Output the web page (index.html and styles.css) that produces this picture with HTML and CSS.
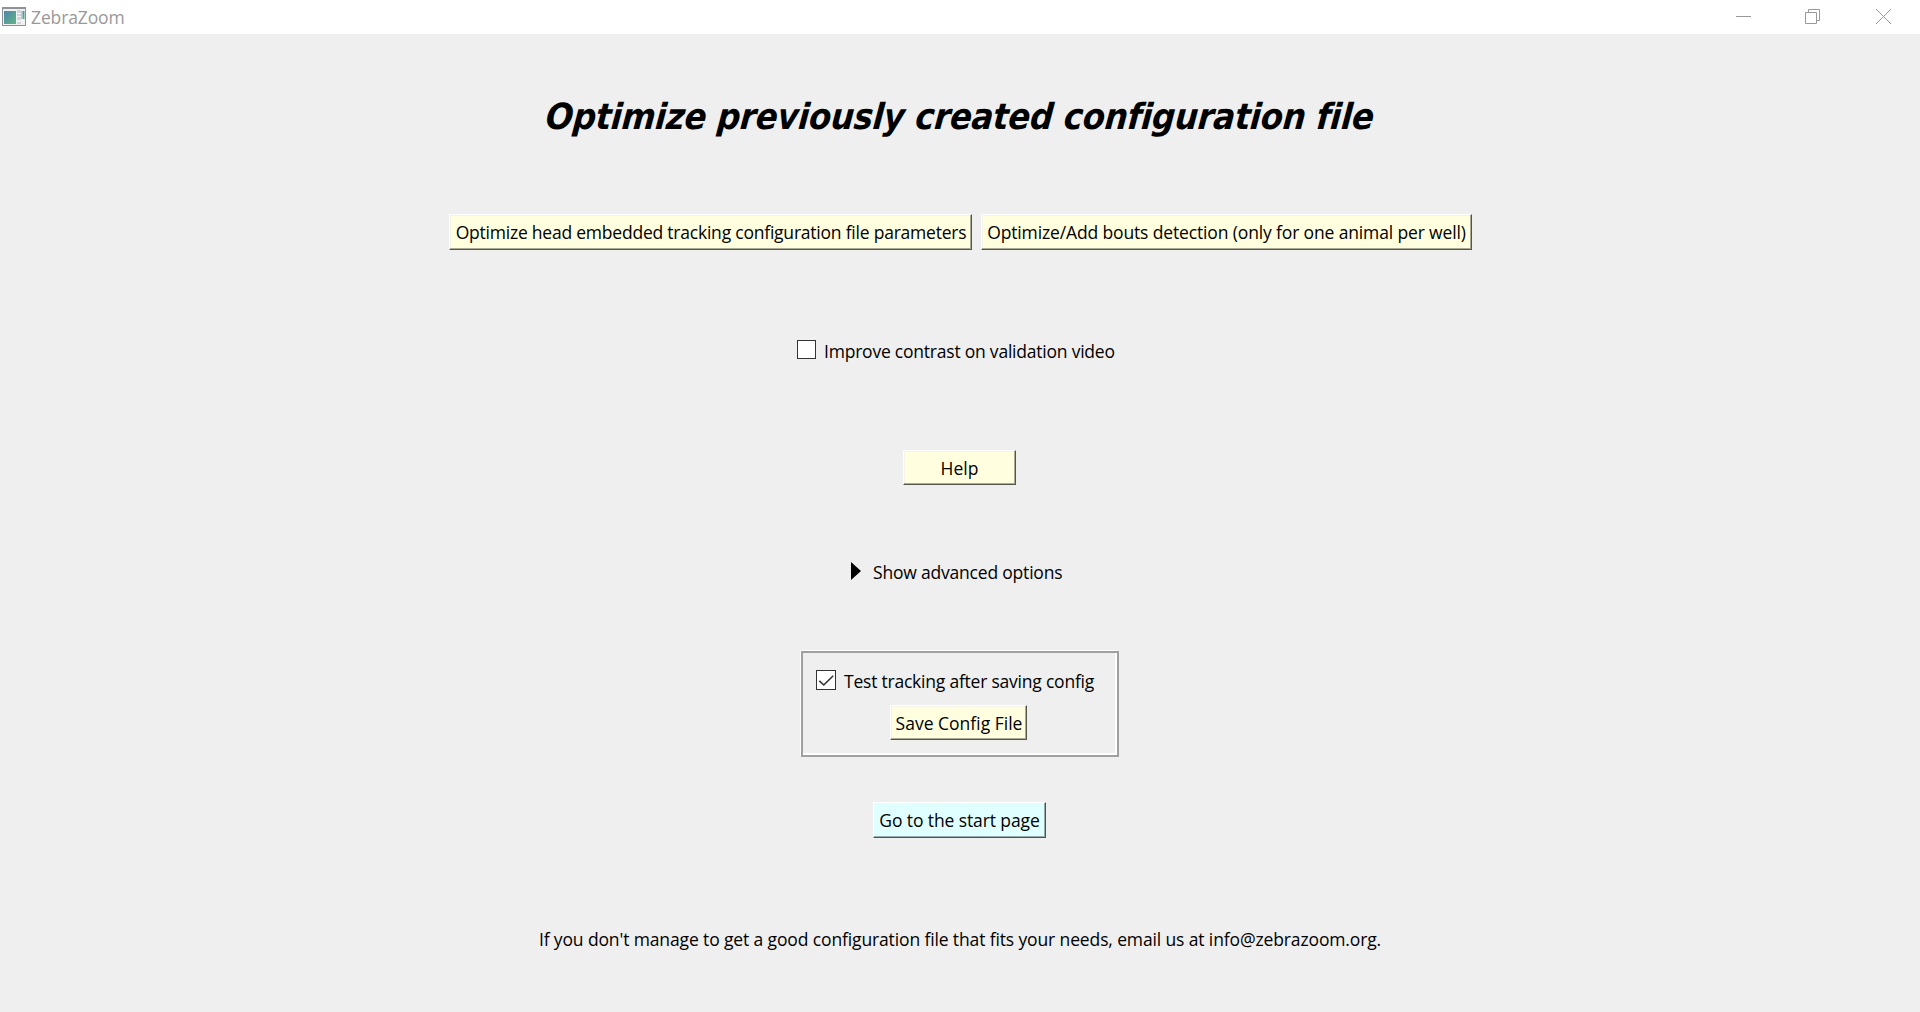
FILE: index.html
```html
<!DOCTYPE html>
<html lang="en">
<head>
<meta charset="utf-8">
<title>ZebraZoom</title>
<link rel="stylesheet" href="styles.css">
</head>
<body>
<header class="titlebar">
  <svg class="app-icon" width="24" height="19" viewBox="0 0 24 19">
    <defs><linearGradient id="g" x1="0" y1="0" x2="1" y2="1"><stop offset="0" stop-color="#4d86ad"/><stop offset="1" stop-color="#62b583"/></linearGradient></defs>
    <path d="M0 0h24v19H0z" fill="#8d9297"/>
    <path d="M1 2h22v16H1z" fill="#f0f1f3"/>
    <path d="M2 4h12v13H2z" fill="url(#g)"/>
    <path d="M15 3h4v3h-4zm0 4h4v2h-4zm0 3h4v3h-4zm0 5h4v2h-4z" fill="#d2d4d6"/>
    <path d="M19 4h1v8h-1z" fill="#bcc6d0"/>
    <path d="M20.500 4h2v8h-2z" fill="url(#g)"/>
  </svg>
  <span class="app-name">ZebraZoom</span>
  <div class="controls">
    <svg width="15" height="15" viewBox="0 0 15 15"><path d="M0 7.500h15"/></svg>
    <svg class="restore" width="15" height="15" viewBox="0 0 15 15"><path d="M.5 3.500h11v11H.5zM3.500 3V.5h11v11H12"/></svg>
    <svg width="15" height="15" viewBox="0 0 15 15"><path d="M0 0l15 15M15 0L0 15"/></svg>
  </div>
</header>
<main class="page">
  <h1 class="title">Optimize previously created configuration file</h1>
  <div class="actions">
    <button class="btn embedded">Optimize head embedded tracking configuration file parameters</button>
    <button class="btn bouts">Optimize/Add bouts detection (only for one animal per well)</button>
  </div>
  <label class="check contrast"><span class="box"></span><span>Improve contrast on validation video</span></label>
  <button class="btn help">Help</button>
  <div class="advanced">
    <svg width="10" height="18" viewBox="0 0 10 18"><path d="M0 0l10 9-10 9z"/></svg>
    <span>Show advanced options</span>
  </div>
  <section class="save-group">
    <label class="check test">
      <span class="box"><svg width="18" height="18" viewBox="0 0 18 18"><path d="M2.300 9.800L6.800 14 16.200 4.800"/></svg></span>
      <span>Test tracking after saving config</span>
    </label>
    <button class="btn save">Save Config File</button>
  </section>
  <button class="btn start">Go to the start page</button>
  <p class="contact">If you don't manage to get a good configuration file that fits your needs, email us at info@zebrazoom.org.</p>
</main>
</body>
</html>
```
FILE: styles.css
```css
* { box-sizing: border-box; }
body { margin: 0; height: 1012px; overflow: hidden; background: #efefef; color: #000; font: 17.5px/24px "Open Sans", "Noto Sans", sans-serif; white-space: nowrap; }
svg { display: block; }

.titlebar { display: flex; align-items: flex-start; height: 34px; background: #fff; padding: 5px 29px 0 2px; color: #999; }
.app-icon { margin-top: 2px; }
.app-name { margin-left: 5px; letter-spacing: -.13px; }
.controls { display: flex; margin: 4px 0 0 auto; }
.controls svg { fill: none; stroke: #999; }
.controls .restore { margin: 0 56px 0 54px; }

.page { display: flex; flex-direction: column; align-items: center; }
.title { margin: 59px 0 0; font: italic bold 36px/48px "DejaVu Sans Condensed", "DejaVu Sans", sans-serif; font-stretch: condensed; letter-spacing: -.3px; transform: skewX(-5deg); }
.actions { display: flex; gap: 9px; margin: 73px 0 0 1px; }

.btn { height: 36px; padding: 0; font: inherit; color: #000; background: #ffffe0; border: 1px solid; border-color: #fff #55554b #55554b #fff; box-shadow: inset -1px -1px #aaaa95, inset 1px 1px #f3f3e8; }
.embedded { width: 523px; padding-left: 1px; letter-spacing: -.22px; }
.bouts { width: 491px; letter-spacing: -.14px; }

.check { display: flex; gap: 8px; }
.box { width: 19px; height: 19px; margin-top: 1px; border: 1px solid #333; background: #fff; }
.box svg { fill: none; stroke: #333; stroke-width: 1.6; }
.contrast { width: 326px; margin-top: 89px; letter-spacing: -.22px; }
.help { width: 113px; height: 35px; margin: 87px 1px 0 0; }

.advanced { display: flex; gap: 12px; width: 218px; margin-top: 75px; letter-spacing: -.2px; }
.advanced svg { margin-top: 2px; }

.save-group { width: 318px; height: 106px; margin: 67px 0 0; padding: 16px 0 0 13px; border: 2px solid #a0a0a0; box-shadow: -1px -1px #fff, inset -2px -2px #fff; }
.test { letter-spacing: -.22px; }
.test .box { width: 20px; height: 20px; }
.save { display: block; width: 137px; height: 35px; margin: 12px 0 0 74px; padding-left: 1px; }

.start { width: 173px; margin: 45px 1px 0 0; background: #e0ffff; border-color: #fff #4b5555 #4b5555 #fff; box-shadow: inset -1px -1px #95aaaa; letter-spacing: -.1px; }
.contact { margin: 89px 0 0; letter-spacing: -.13px; }
```
